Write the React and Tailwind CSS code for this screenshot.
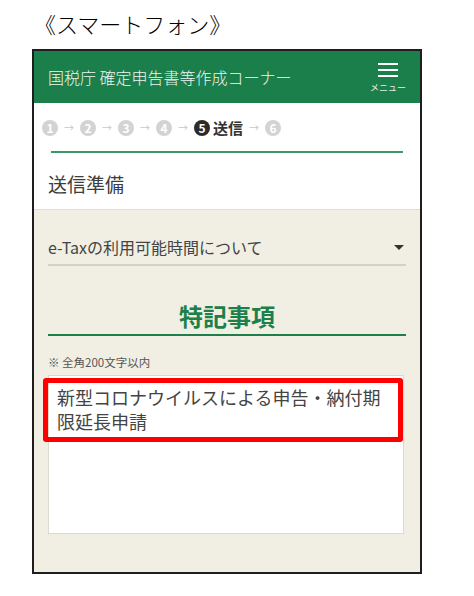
export default function App() {
  const font = { fontFamily: '"Noto Sans CJK JP", "Noto Sans", sans-serif' };
  const Step = ({ n, active }) => (
    <span
      className={`flex h-[16px] w-[16px] items-center justify-center rounded-full text-[12px] font-bold leading-none text-white ${active ? "bg-[#2b2b2b]" : "bg-[#d3d3d3]"}`}
    >
      {n}
    </span>
  );
  const Arrow = () => (
    <span className="flex w-[22px] justify-center text-[10px] leading-none text-[#c8c8c8]">→</span>
  );
  return (
    <div className="min-h-[596px] w-[474px] bg-white" style={font}>
      <div className="h-[49px] pl-[34px] pt-[8px] text-[22px] font-light leading-[30px] text-black">《スマートフォン》</div>
      <div className="ml-[32px] flex h-[525px] w-[390px] flex-col border-2 border-[#1e1e1e] bg-[#f1efe4]">
        <div className="flex h-[52px] shrink-0 items-center justify-between bg-[#1b7f4c] pl-[14px] pr-[14px]">
          <span className="text-[16px] font-light text-[#eef5f0]">国税庁 確定申告書等作成コーナー</span>
          <div className="flex flex-col items-center pt-[2px]">
            <div className="flex flex-col gap-[4px]">
              <span className="block h-[2px] w-[20px] bg-white"></span>
              <span className="block h-[2px] w-[20px] bg-white"></span>
              <span className="block h-[2px] w-[20px] bg-white"></span>
            </div>
            <span className="mt-[5px] text-[9px] leading-[12px] text-[#e6efe9]">メニュー</span>
          </div>
        </div>
        <div className="h-[107px] shrink-0 border-b border-[#e0ddd2] bg-white">
          <div className="flex h-[24px] items-center pl-[8px] mt-[13px]">
            <Step n="1" />
            <Arrow />
            <Step n="2" />
            <Arrow />
            <Step n="3" />
            <Arrow />
            <Step n="4" />
            <Arrow />
            <Step n="5" active />
            <span className="ml-[3px] text-[15px] font-bold text-[#333]">送信</span>
            <Arrow />
            <Step n="6" />
          </div>
          <div className="mx-[17px] mt-[11px] h-[2px] bg-[#3b9a62]"></div>
          <div className="pl-[14px] pt-[17px] text-[19px] leading-[28px] text-[#3c3c3c]">送信準備</div>
        </div>
        <div className="flex flex-col px-[14px]">
          <div className="mt-[24px] flex h-[26px] items-center justify-between pr-[2px]">
            <span className="text-[16px] text-[#444]">e-Taxの利用可能時間について</span>
            <span className="h-0 w-0 border-x-[5px] border-t-[5px] border-x-transparent border-t-[#333]"></span>
          </div>
          <div className="mt-[4px] h-[2px] bg-[#d5d1c6]"></div>
          <div className="mt-[35px] text-center text-[24px] font-bold leading-[30px] text-[#1c8048]">特記事項</div>
          <div className="mt-[3px] h-[2px] bg-[#1c8048]"></div>
          <div className="mt-[19px] text-[11.5px] leading-[15px] text-[#555]">※ 全角200文字以内</div>
          <div className="relative mt-[5px] h-[159px] w-[356px] border border-[#dcd9cf] bg-white">
            <div className="pl-[8px] pt-[9px] text-[18px] leading-[24px] text-[#444]">
              新型コロナウイルスによる申告・納付期<br />限延長申請
            </div>
            <div className="absolute left-[-6px] top-[2px] h-[64px] w-[360px] rounded-[3px] border-[5px] border-[#ff0000]"></div>
          </div>
        </div>
      </div>
    </div>
  );
}
